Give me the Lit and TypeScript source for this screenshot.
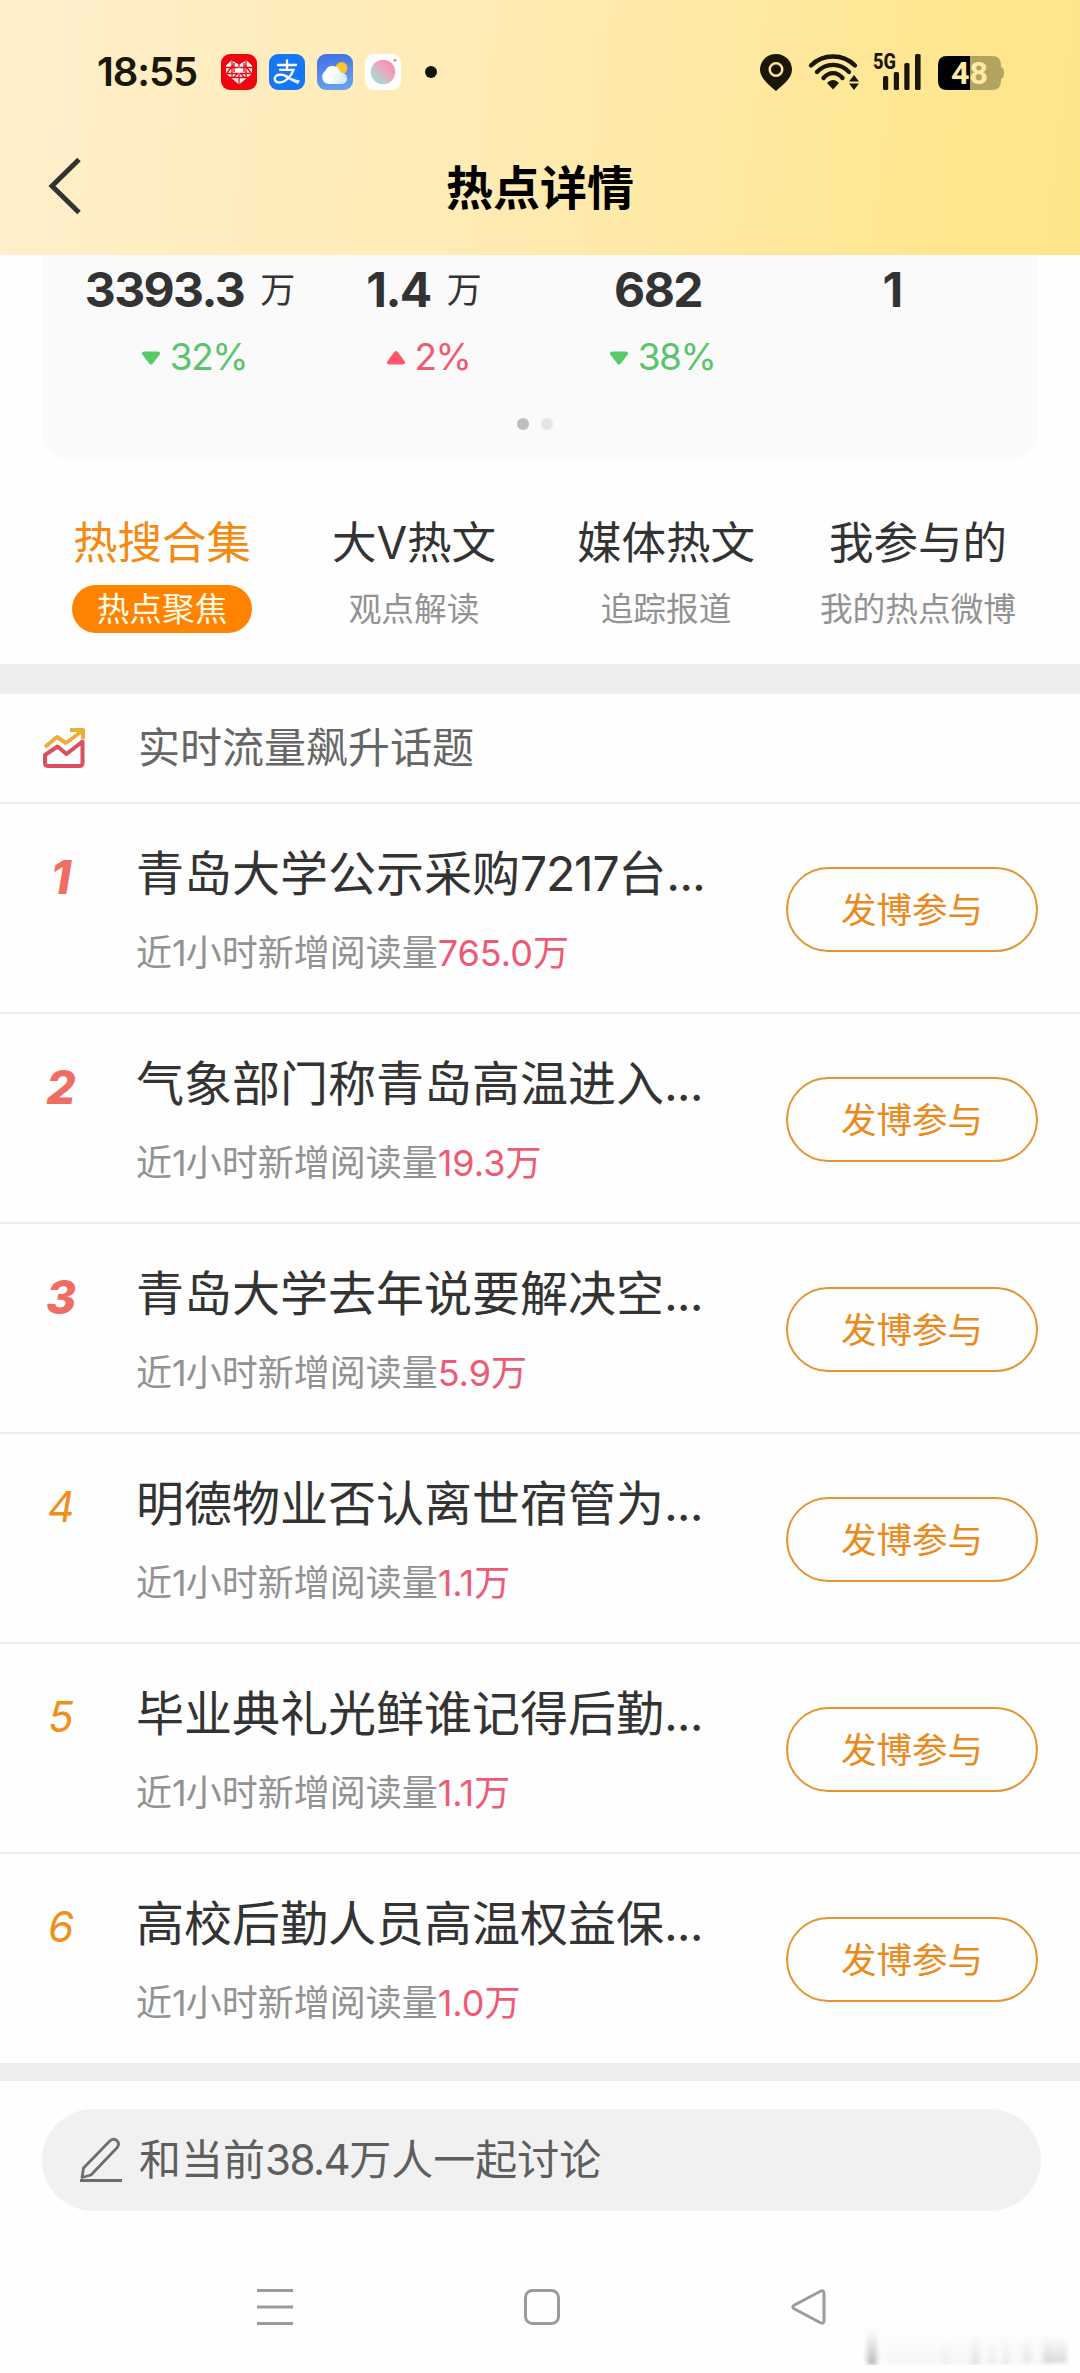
import { LitElement, html, css, svg } from "lit";
import { customElement } from "lit/decorators.js";
import { classMap } from "lit/directives/class-map.js";

interface Stat { value: string; unit?: string; pct?: string; up?: boolean; }
interface Tab { title: string; sub: string; active?: boolean; }
interface Topic { pre: string; num?: string; post?: string; reads: string; }

const stats: Stat[] = [
  { value: "3393.3", unit: "万", pct: "32%" },
  { value: "1.4", unit: "万", pct: "2%", up: true },
  { value: "682", pct: "38%" },
  { value: "1" },
];

const tabs: Tab[] = [
  { title: "热搜合集", sub: "热点聚焦", active: true },
  { title: "大V热文", sub: "观点解读" },
  { title: "媒体热文", sub: "追踪报道" },
  { title: "我参与的", sub: "我的热点微博" },
];

const topics: Topic[] = [
  { pre: "青岛大学公示采购", num: "7217", post: "台", reads: "765.0" },
  { pre: "气象部门称青岛高温进入", reads: "19.3" },
  { pre: "青岛大学去年说要解决空", reads: "5.9" },
  { pre: "明德物业否认离世宿管为", reads: "1.1" },
  { pre: "毕业典礼光鲜谁记得后勤", reads: "1.1" },
  { pre: "高校后勤人员高温权益保", reads: "1.0" },
];

const heartIcon = svg`
  <rect width="36" height="36" rx="9" fill="#ee0510"/>
  <path d="M18 30 5.5 19.500V11.500L10.500 7 18 11 25.500 7 30.500 11.500V19.500Z" fill="#fff" stroke="#fff" stroke-width="1" stroke-linejoin="round"/>
  <g stroke="#ee0510" stroke-width="1.300" fill="none">
    <path d="M5 13.500h26M5 19.500h26M9 23.500h18M18 10v5M18 20v10M11 7v17M25 7v17M6 19l6-8M30 19l-6-8M12 24l5-5M24 24l-5-5M13 9v9M23 9v9"/>
  </g>
  <path d="M15 16.500h6M18 13.500v6" stroke="#fff" stroke-width="1.500"/>`;

const payIcon = svg`
  <rect width="36" height="36" rx="9" fill="#1677f5"/>
  <g fill="none" stroke="#fff" stroke-width="2.300" stroke-linecap="round">
    <path d="M9 11h18M18 6.500v9M11 15.800h13.500C22.500 22 16 28.500 10.500 28.500 6.500 28.500 5 26 6 23.500 7.500 20 13 19.500 18 22.500"/>
  </g>
  <path d="M17 21C22 24 26 25.500 31 26.500L29 30C24 28 20 25.500 16 23.500Z" fill="#fff" opacity=".85"/>`;

const weatherIcon = svg`
  <defs>
    <linearGradient id="sky" x1="0" y1="0" x2="0.200" y2="1"><stop offset="0" stop-color="#3e6ee6"/><stop offset="1" stop-color="#669ff0"/></linearGradient>
    <linearGradient id="cloud" x1="0" y1="0" x2="1" y2="0.300"><stop offset="0.500" stop-color="#fff"/><stop offset="1" stop-color="#dbe8f8"/></linearGradient>
  </defs>
  <rect width="36" height="36" rx="9" fill="url(#sky)"/>
  <circle cx="24.500" cy="14" r="6" fill="#fcc52a"/>
  <path d="M12 30a6.800 6.800 0 0 1-6.800-7c0-3 1.300-4.800 3-6A8 8 0 0 1 23.500 18.500a6 6 0 0 1 6.500 6c0 3-2 5.500-6 5.500Z" fill="url(#cloud)"/>`;

const ballIcon = svg`
  <defs><linearGradient id="ball" x1="0.900" y1="0.100" x2="0.100" y2="0.900"><stop offset="0" stop-color="#f889b0"/><stop offset="0.400" stop-color="#eca7bd"/><stop offset="1" stop-color="#94e4d8"/></linearGradient></defs>
  <rect width="36" height="36" rx="9" fill="#fff"/>
  <circle cx="18" cy="18" r="12.200" fill="url(#ball)"/>
  <circle cx="30" cy="6.300" r="1.500" fill="#e68aa4"/>`;

@customElement("app-root")
export class AppRoot extends LitElement {
  static styles = css`
    :host { display: block; font-family: Inter, "Noto Sans CJK SC", sans-serif; color: #333; }
    * { box-sizing: border-box; }
    svg { display: block; flex: none; }
    .screen { height: 2373px; background: #fefefe; display: flex; flex-direction: column; overflow: hidden; white-space: nowrap; }

    .head { height: 255px; flex: none; background: linear-gradient(97deg, #ffefcb 0%, #ffebb4 45%, #ffe68d 90%, #ffe58a 100%); }
    .status { height: 144px; padding: 0 75px 0 97px; display: flex; align-items: center; color: #1a160a; }
    .time { font-size: 40px; font-weight: 600; line-height: 48px; width: 124px; letter-spacing: -1.100px; }
    .apps { display: flex; gap: 12px; margin-right: 24px; }
    .grow { flex: 1; }
    .bar { height: 84px; padding: 0 48px; display: grid; grid-template-columns: 36px 1fr 36px; align-items: center; }
    .bar-title { padding-top: 3px; font-size: 47px; font-weight: 700; line-height: 60px; color: #000; text-align: center; }

    .card { margin: 0 42px; width: 996px; height: 204px; flex: none; background: #fafafa; border-radius: 0 0 26px 26px; padding: 7px 30px 0 31px; display: flex; flex-direction: column; }
    .stats { display: grid; grid-template-columns: repeat(4, 234px); }
    .stat { display: flex; flex-direction: column; align-items: center; }
    .value { height: 56px; display: flex; align-items: center; font-size: 48px; font-weight: 700; line-height: 56px; letter-spacing: -1.600px; }
    .unit { font-size: 35px; font-weight: 400; margin-left: 16px; letter-spacing: 0; }
    .pct { height: 56px; margin-top: 11px; margin-left: 8px; display: flex; align-items: center; gap: 9px; font-size: 37px; line-height: 56px; letter-spacing: -1.500px; color: #5cc46c; }
    .pct.up { color: #ee5a70; }
    .dots { margin: 33px 12px 0 0; display: flex; justify-content: center; gap: 12px; }
    .dot { width: 12px; height: 12px; border-radius: 6px; background: #e6e6e6; }
    .dot.on { background: #bfbfbf; }

    .tabs { height: 205px; flex: none; padding: 54px 36px 0; display: grid; grid-template-columns: repeat(4, 252px); }
    .tab { display: flex; flex-direction: column; align-items: center; }
    .tab-title { font-size: 44.500px; line-height: 60px; }
    .tab-sub { margin-top: 12px; height: 48px; padding: 0 25px; border-radius: 24px; font-size: 32.700px; line-height: 48px; color: #929292; }
    .tab.active .tab-title { color: #f58a12; }
    .tab.active .tab-sub { background: #ff8200; color: #fffbe6; }

    .band { height: 30px; flex: none; background: #ededed; }
    .section { height: 110px; flex: none; padding-left: 42px; display: flex; align-items: center; border-bottom: 2px solid #ececec; }
    .section-title { margin-left: 52px; font-size: 42px; line-height: 60px; color: #666; }

    .topic { height: 210px; flex: none; padding: 0 42px 0 42px; display: grid; grid-template-columns: 94px 1fr 252px; border-bottom: 2px solid #ececec; }
    .topic:last-of-type { height: 209px; border-bottom: 0; }
    .rank { padding-top: 38px; width: 38px; text-align: center; font-size: 42px; line-height: 70px; font-style: italic; color: #ef8f1d; }
    .rank.top { font-weight: 800; font-size: 46px; color: #ef6d62; }
    .name { margin-top: 35px; font-size: 48px; line-height: 70px; }
    .digits { letter-spacing: -1.200px; }
    .ell { letter-spacing: -1px; }
    .reads { margin-top: 14px; font-size: 36px; line-height: 60px; color: #929292; }
    .one { letter-spacing: -1px; }
    .count { color: #ee5a74; }
    .count-num { letter-spacing: 0; }
    .join { margin-top: 63px; width: 252px; height: 85px; border: 2px solid #e69431; border-radius: 43px; font-size: 35.500px; line-height: 83px; text-align: center; color: #ea8a1c; }

    .band.low { height: 18px; }
    .compose { margin: 28px 0 0 42px; width: 999px; height: 102px; flex: none; border-radius: 51px; background: #f1f1f1; padding-left: 38px; display: flex; align-items: center; }
    .compose-text { margin-left: 17px; font-size: 42px; line-height: 60px; color: #5e5e5e; }
    .compose-num { letter-spacing: -1.500px; }
    .nav { flex: none; margin-top: 78px; padding: 0 253px 0 257px; display: flex; justify-content: space-between; height: 36px; }
    .smudge { align-self: flex-end; margin: 2px 11px 0 0; }
  `;

  private statusIcons() {
    return html`
      <svg width="246" height="54" viewBox="759 45 246 54">
        <path fill-rule="evenodd" fill="#1a160a" d="M776 54c9 0 16 7 16 15.500 0 9-9 15-16 21.500-7-6.500-16-12.500-16-21.500C760 61 767 54 776 54Zm0 8a7.500 7.500 0 1 0 0 15 7.500 7.500 0 0 0 0-15Z"/>
        <circle cx="776" cy="69.500" r="5" fill="#1a160a"/>
        <g fill="none" stroke="#1a160a" stroke-width="4.400" stroke-linecap="round">
          <path d="M811 65.500C823 53.500 843 53.500 855 65.500M817 72C826 62.500 840 62.500 849 72M823.500 78C829 71.500 837 71.500 842.500 78"/>
        </g>
        <path d="M827 83C831 79 835 79 839 83L833 89.500Z" fill="#1a160a"/>
        <path d="M854 75l5 6.500h-10ZM854 90l-5-6.500h10Z" fill="#1a160a"/>
        <text x="873" y="69" font-family="Roboto, sans-serif" font-size="22" font-weight="800" textLength="23" lengthAdjust="spacingAndGlyphs" fill="#1a160a">5G</text>
        <g fill="#1a160a">
          <rect x="883" y="76" width="5.200" height="14" rx="1.500"/>
          <rect x="893.800" y="72" width="5.200" height="18" rx="1.500"/>
          <rect x="904.300" y="63" width="5.200" height="27" rx="1.500"/>
          <rect x="915" y="54" width="5.600" height="36" rx="1.500"/>
        </g>
        <path d="M970 56h22q9 0 9 9v2q3 1 3 6t-3 6v2q0 9-9 9h-22Z" fill="#b3a363"/>
        <path d="M970 56h-23q-9 0-9 9v16q0 9 9 9h23Z" fill="#000"/>
        <text x="951" y="84" font-family="Roboto, sans-serif" font-size="31" font-weight="700" textLength="37" lengthAdjust="spacingAndGlyphs" fill="#ffeaa2">48</text>
      </svg>`;
  }

  private arrow(up?: boolean) {
    return html`<svg width="20" height="16" viewBox="0 0 20 16">
      <path d=${up ? "M3 13.500h14L10 4Z" : "M3 4.500h14L10 13.500Z"} fill=${up ? "#ff566c" : "#58cb68"} stroke=${up ? "#ff566c" : "#58cb68"} stroke-width="4" stroke-linejoin="round"/>
    </svg>`;
  }

  private topicRow(t: Topic, i: number) {
    return html`<article class="topic">
      <div class=${classMap({ rank: true, top: i < 3 })}>${i + 1}</div>
      <div>
        <div class="name">${t.pre}<span class="digits">${t.num ?? ""}</span>${t.post ?? ""}<span class="ell">...</span></div>
        <div class="reads">近<span class="one">1</span>小时新增阅读量<span class="count"><span class="count-num">${t.reads}</span>万</span></div>
      </div>
      <div class="join">发博参与</div>
    </article>`;
  }

  render() {
    return html`<main class="screen">
      <header class="head">
        <div class="status">
          <div class="time">18:55</div>
          <div class="apps">
            ${[heartIcon, payIcon, weatherIcon, ballIcon].map(i => html`<svg width="36" height="36" viewBox="0 0 36 36">${i}</svg>`)}
          </div>
          <svg width="12" height="12"><circle cx="6" cy="6" r="6" fill="#14110a"/></svg>
          <div class="grow"></div>
          ${this.statusIcons()}
        </div>
        <div class="bar">
          <svg width="36" height="60" viewBox="0 0 36 60"><path d="M31 3.500 4 30l27 26.500" fill="none" stroke="#333" stroke-width="5"/></svg>
          <div class="bar-title">热点详情</div>
        </div>
      </header>

      <section class="card">
        <div class="stats">
          ${stats.map(s => html`<div class="stat">
            <div class="value">${s.value}${s.unit ? html`<span class="unit">${s.unit}</span>` : ""}</div>
            ${s.pct ? html`<div class=${classMap({ pct: true, up: !!s.up })}>${this.arrow(s.up)}<span>${s.pct}</span></div>` : ""}
          </div>`)}
        </div>
        <div class="dots"><i class="dot on"></i><i class="dot"></i></div>
      </section>

      <nav class="tabs">
        ${tabs.map(t => html`<div class=${classMap({ tab: true, active: !!t.active })}>
          <div class="tab-title">${t.title}</div><div class="tab-sub">${t.sub}</div>
        </div>`)}
      </nav>
      <div class="band"></div>

      <div class="section">
        <svg width="44" height="44" viewBox="0 0 44 44" fill="none" stroke-width="4" stroke-linejoin="round">
          <path d="M3 21 15 11l9 6L40 5M28 4h13v9" stroke="#ebae3b"/>
          <path d="M40.500 15.500V37q0 3-3 3H6q-3 0-3-3V29L15.500 20.500l9 7.500Z" stroke="#dc4f60"/>
        </svg>
        <div class="section-title">实时流量飙升话题</div>
      </div>
      ${topics.map((t, i) => this.topicRow(t, i))}
      <div class="band low"></div>

      <div class="compose">
        <svg width="42" height="46" viewBox="0 0 42 46" fill="none" stroke="#6e6e6e" stroke-width="2.800" stroke-linejoin="round">
          <path d="M2 40.500 3.500 31 30 3.800q4-3 7 0t0 7L11 38Z"/>
          <path d="M0 43.500h42"/>
        </svg>
        <div class="compose-text">和当前<span class="compose-num">38.4</span>万人一起讨论</div>
      </div>

      <div class="nav">
        <svg width="36" height="36" stroke="#9b9b9b" stroke-width="3"><path d="M0 1.500h36M0 18h36M0 34.500h36"/></svg>
        <svg width="36" height="36" fill="none" stroke="#9b9b9b" stroke-width="3"><rect x="1.500" y="1.500" width="33" height="33" rx="7"/></svg>
        <svg width="36" height="36" fill="none" stroke="#9b9b9b" stroke-width="3"><path d="M29 2.500q4-2 4 2v27q0 4-4 2L3.500 20q-3.500-2 0-4Z"/></svg>
      </div>
      <svg class="smudge" width="206" height="38" viewBox="0 0 206 38">
        <defs>
          <filter id="soft" x="-20%" y="-20%" width="140%" height="140%"><feGaussianBlur stdDeviation="2.500 2"/></filter>
          <linearGradient id="fade" x1="0" y1="0" x2="0" y2="1"><stop offset="0" stop-color="#999" stop-opacity="0"/><stop offset="1" stop-color="#888" stop-opacity=".6"/></linearGradient>
        </defs>
        <g filter="url(#soft)" fill="url(#fade)">
          <rect x="4" y="2" width="10" height="36"/>
          <rect x="20" y="4" width="170" height="34" opacity=".1"/>
          <rect x="108" y="8" width="9" height="30" opacity=".35"/><rect x="78" y="10" width="10" height="28" opacity=".15"/><rect x="126" y="8" width="6" height="30" opacity=".2"/>
          <rect x="140" y="8" width="6" height="30" opacity=".25"/><rect x="160" y="8" width="8" height="28" opacity=".3"/><rect x="180" y="8" width="24" height="28" opacity=".5"/>
        </g>
      </svg>
    </main>`;
  }
}
